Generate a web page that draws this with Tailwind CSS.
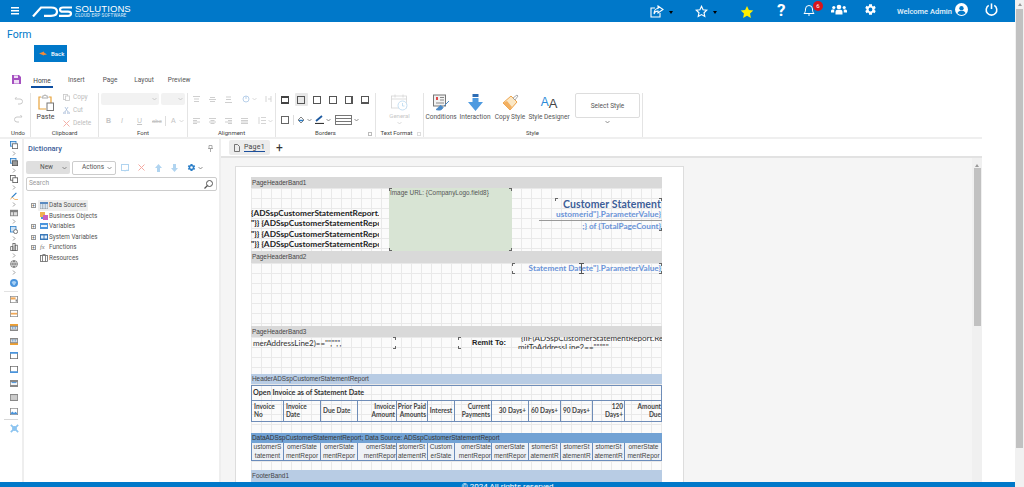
<!DOCTYPE html>
<html lang="en">
  <head>
    <meta charset="UTF-8" />
    <meta name="viewport" content="width=device-width, initial-scale=1.0" />
    <title>Form</title>
    <script src="https://cdn.jsdelivr.net/npm/@tailwindcss/browser@4"></script>
  </head>
  <body class="h-screen overflow-hidden bg-white font-['Roboto',sans-serif] text-[#555]">
    <div class="flex h-[487px] w-[1024px]">
      <div class="flex h-full w-[1015px] flex-col">
        <!-- top bar -->
        <header class="flex h-[22px] shrink-0 items-center bg-[#0078c9] text-white">
          <svg class="ml-[11px] h-[8px] w-[8px]" viewBox="0 0 8 8" fill="#fff"><rect width="8" height="1.500"/><rect y="3" width="8" height="1.500"/><rect y="6" width="8" height="1.500"/></svg>
          <div class="ml-[13px] flex h-[16px] w-[103px] items-center">
            <svg class="h-[11px] w-[41px]" viewBox="0 0 41 11" fill="none" stroke="#fff" stroke-width="2.200"><path d="M1 10.500L9 1.500H19Q25 1.500 25 5.700Q25 9.800 19 9.800H12"/><path d="M40 1.500H31Q28 1.500 28 3.700Q28 5.700 31 5.700H36Q39 5.700 39 7.800Q39 9.800 36 9.800H27"/></svg>
            <div class="ml-[2px] flex flex-col">
              <span class="h-[8px] font-['Liberation_Sans',sans-serif] text-[9.500px] leading-[8px] tracking-[0.1px] text-white">SOLUTIONS</span>
              <span class="h-[5px] text-[4.500px] leading-[5px] tracking-[0.2px] text-white/90">CLOUD ERP SOFTWARE</span>
            </div>
          </div>
          <div class="relative ml-[515px] h-full w-[365px]">
            <svg class="absolute left-0 top-[5px] h-[13px] w-[14px]" viewBox="0 0 14 13" fill="none" stroke="#fff" stroke-width="1.100"><path d="M10 8v4H1V3h4"/><path d="M8 1l5 3.500L8 8V6C6 6 4.500 7 4 9 4 6 5.500 3.500 8 3.500z"/></svg>
            <span class="absolute left-[19px] top-[11px] h-0 w-0 border-x-[2.500px] border-t-[3px] border-x-transparent border-t-black"></span>
            <svg class="absolute left-[45px] top-[5px] h-[13px] w-[13px]" viewBox="0 0 24 24" fill="none" stroke="#fff" stroke-width="2.200"><path d="M12 2.500l2.900 6.300 6.800.8-5 4.700 1.300 6.800-6-3.400-6 3.400 1.300-6.800-5-4.700 6.800-.8z"/></svg>
            <span class="absolute left-[63px] top-[11px] h-0 w-0 border-x-[2.500px] border-t-[3px] border-x-transparent border-t-black"></span>
            <svg class="absolute left-[90px] top-[5px] h-[14px] w-[14px]" viewBox="0 0 24 24" fill="#ffef00"><path d="M12 1.500l3.200 7 7.600.9-5.600 5.200 1.500 7.500-6.700-3.800-6.700 3.800 1.500-7.500-5.600-5.200 7.600-.9z"/></svg>
            <span class="absolute left-[127px] top-0 text-[17px] font-bold leading-[20px]">?</span>
            <svg class="absolute left-[153px] top-[4px] h-[12px] w-[12px]" viewBox="0 0 12 12" fill="none" stroke="#fff" stroke-width="1"><path d="M1 9.500h10C9.500 8 9.500 6.500 9.500 5a3.500 3.500 0 0 0-7 0c0 1.500 0 3-1.500 4.500zM5 11h2"/></svg>
            <span class="absolute left-[163px] top-px flex h-[10px] w-[10px] items-center justify-center rounded-full bg-[#d8141c] text-[6px] leading-none">6</span>
            <svg class="absolute left-[181px] top-[4px] h-[11px] w-[16px]" viewBox="0 0 16 11" fill="#fff"><circle cx="8" cy="3" r="2.300"/><circle cx="2.800" cy="3.500" r="1.600"/><circle cx="13.200" cy="3.500" r="1.600"/><path d="M4.500 10.500V8c0-1.500 1-2.300 2-2.300h3c1 0 2 .8 2 2.300v2.500zM0 8.500V7c0-1 .8-1.500 1.500-1.500h2C3 6.200 3.300 7.500 3.300 8.500zM16 8.500V7c0-1-.8-1.500-1.500-1.500h-2c.5.700.2 2 .2 3z"/></svg>
            <svg class="absolute left-[214px] top-[3px] h-[13px] w-[13px]" viewBox="0 0 24 24" fill="#fff"><path d="M19.400 13a7.500 7.500 0 0 0 0-2l2.300-1.700-2.300-4-2.600 1.100a7.500 7.500 0 0 0-1.800-1L14.700 2.500h-5.400L9 5.400a7.500 7.500 0 0 0-1.800 1L4.600 5.300l-2.300 4L4.600 11a7.500 7.500 0 0 0 0 2l-2.300 1.700 2.300 4 2.600-1.100a7.500 7.500 0 0 0 1.800 1l.3 2.900h5.400l.3-2.900a7.500 7.500 0 0 0 1.800-1l2.600 1.100 2.300-4zM12 15.500a3.500 3.500 0 1 1 0-7 3.500 3.500 0 0 1 0 7z"/></svg>
            <span class="absolute left-[247px] top-[6px] whitespace-nowrap text-[7.500px] font-medium leading-[11px] text-white/90">Welcome Admin</span>
            <svg class="absolute left-[305px] top-[3px] h-[13px] w-[13px]" viewBox="0 0 24 24"><circle cx="12" cy="12" r="12" fill="#fff"/><circle cx="12" cy="9.500" r="4" fill="#0078c9"/><path d="M4.500 19c1.500-3.500 4-4.500 7.500-4.500s6 1 7.500 4.500a10.500 10.500 0 0 1-15 0z" fill="#0078c9"/></svg>
            <svg class="absolute left-[335px] top-[3px] h-[13px] w-[13px]" viewBox="0 0 14 14" fill="none" stroke="#fff" stroke-width="1.700"><path d="M4 2.500a5.700 5.700 0 1 0 6 0"/><path d="M7 .5v6"/></svg>
          </div>
        </header>

        <!-- form head -->
        <div class="h-[53px] shrink-0 pl-[7px] pt-[6px]">
          <h1 class="text-[10.500px] leading-[13px] text-[#0078c9]">Form</h1>
          <button class="ml-[27px] mt-[4px] flex h-[17px] w-[33px] items-center bg-[#0078c9] pl-[5px] text-[6px] text-white">
            <svg class="h-[5px] w-[8px]" viewBox="0 0 8 5" fill="#f08a38"><path d="M0 3.500L3 1.500V.5L8 2.500 3 4.500V4z" transform="matrix(-1 0 0 1 8 0)"/></svg>
            <span class="ml-[4px] font-medium">Back</span>
          </button>
        </div>

        <!-- ribbon tabs -->
        <div class="flex h-[15px] shrink-0 items-start text-[6.500px] leading-[9px]">
          <svg class="ml-[12px] h-[9px] w-[9px]" viewBox="0 0 9 9"><path d="M0 0h7l2 2v7H0z" fill="#a550c0"/><rect x="2" y=".5" width="4" height="2.500" fill="#f0e0f5"/><rect x="2" y="5" width="5" height="3.500" fill="#f0e0f5"/></svg>
          <div class="ml-[10px] flex h-[13px] w-[22px] items-center justify-center border-b-[2px] border-[#0d4ea0] pt-px text-[#444]">Home</div>
          <span class="ml-[15px] mt-[1px] h-[9px]">Insert</span>
          <span class="ml-[18px] mt-[1px] h-[9px]">Page</span>
          <span class="ml-[17px] mt-[1px] h-[9px]">Layout</span>
          <span class="ml-[14px] mt-[1px] h-[9px]">Preview</span>
        </div>

        <!-- ribbon -->
        <div class="flex h-[47px] w-[982px] shrink-0 pt-[3px] text-[6px] leading-[8px]">
          <section class="flex h-[44px] w-[31px] flex-col border-r border-[#e4e4e4]">
            <div class="flex h-[36px] flex-col items-center gap-[9px] pl-[6px] pt-[3px]">
              <svg class="h-[9px] w-[9px]" viewBox="0 0 9 9" fill="none" stroke="#c8c8c8"><path d="M2.500 1L1 3h5a2.500 2.500 0 0 1 0 5H4"/></svg>
              <svg class="h-[9px] w-[9px]" viewBox="0 0 9 9" fill="none" stroke="#c8c8c8"><path d="M6.500 1L8 3H3a2.500 2.500 0 0 0 0 5h2"/></svg>
            </div>
            <div class="pl-[6px] text-center text-[#444]">Undo</div>
          </section>

          <section class="flex h-[44px] w-[68px] flex-col border-r border-[#e4e4e4]">
            <div class="flex h-[36px]">
              <div class="ml-[6px] flex w-[17px] flex-col items-center">
                <svg class="mt-[1px] h-[17px] w-[16px]" viewBox="0 0 16 17" fill="none"><path d="M11 3h2v6M3 3H1v12h7" stroke="#e8a33c" stroke-width="1.200"/><path d="M4 3c0-1 1-1 1-1h1c0-1.500 2-1.500 2 0h1s1 0 1 1v1H4z" stroke="#888" stroke-width=".7" fill="#fff"/><rect x="9" y="9" width="6.500" height="7.500" stroke="#777" fill="#fff"/></svg>
                <span class="mt-[2px] text-[7px] text-[#444]">Paste</span>
              </div>
              <div class="ml-[9px] flex flex-col gap-[5px] text-[6.500px] text-[#bdbdbd]">
                <div class="flex h-[8px] items-center gap-[3px]"><svg class="h-[7px] w-[7px]" viewBox="0 0 7 7" fill="none" stroke="#c8c8c8" stroke-width=".8"><rect x=".5" y=".5" width="4" height="5"/><rect x="2.500" y="2" width="4" height="4.500" fill="#fff"/></svg>Copy</div>
                <div class="flex h-[8px] items-center gap-[3px]"><svg class="h-[7px] w-[7px]" viewBox="0 0 7 7" fill="none" stroke="#a8bcd8" stroke-width=".8"><path d="M2 0l3 5M5 0L2 5"/><circle cx="1.500" cy="6" r="1"/><circle cx="5.500" cy="6" r="1"/></svg>Cut</div>
                <div class="flex h-[8px] items-center gap-[3px]"><svg class="h-[7px] w-[7px]" viewBox="0 0 7 7" fill="none" stroke="#f4b0a8" stroke-width="1"><path d="M.5.500l6 6M6.500.500l-6 6"/></svg>Delete</div>
              </div>
            </div>
            <div class="text-center text-[#444]">Clipboard</div>
          </section>

          <section class="flex h-[44px] w-[89px] flex-col border-r border-[#e4e4e4]">
            <div class="h-[36px]">
              <div class="ml-[2px] flex gap-[2px]">
                <div class="flex h-[12px] w-[58px] items-center justify-end rounded-[2px] bg-[#f2f2f2] pr-[2px]"><svg class="h-[4px] w-[5px]" viewBox="0 0 5 4" fill="none" stroke="#bbb" stroke-width=".7"><path d="M.5 1l2 2 2-2"/></svg></div>
                <div class="flex h-[12px] w-[24px] items-center justify-end rounded-[2px] bg-[#f2f2f2] pr-[2px]"><svg class="h-[4px] w-[5px]" viewBox="0 0 5 4" fill="none" stroke="#bbb" stroke-width=".7"><path d="M.5 1l2 2 2-2"/></svg></div>
              </div>
              <div class="mt-[11px] flex items-center pl-[7px] font-['Liberation_Sans',sans-serif] text-[7px] leading-[8px] text-[#c4c4c4]">
                <b class="w-[15px]">B</b><i class="w-[16px]">I</i><u class="w-[15px]">U</u><span class="w-[12px] text-[6px]"><s>abc</s></span>
                <span class="ml-[1px] h-[10px] w-px bg-[#ddd]"></span><span class="ml-[5px]">A</span>
                <svg class="ml-[3px] h-[4px] w-[5px]" viewBox="0 0 5 4" fill="none" stroke="#ccc" stroke-width=".7"><path d="M.5 1l2 2 2-2"/></svg>
              </div>
            </div>
            <div class="text-center text-[#444]">Font</div>
          </section>

          <section class="flex h-[44px] w-[88px] flex-col border-r border-[#e4e4e4]">
            <div class="h-[36px] pl-[5px] pt-[2px]">
              <div class="flex items-center gap-[9px]">
                <svg class="h-[7px] w-[7px]" viewBox="0 0 7 7" stroke="#cfcfcf"><path d="M0 .5h7M1 3h5M1 5.500h5"/></svg>
                <svg class="h-[7px] w-[7px]" viewBox="0 0 7 7" stroke="#cfcfcf"><path d="M1 1.500h5M0 3.500h7M1 5.500h5"/></svg>
                <svg class="h-[7px] w-[7px]" viewBox="0 0 7 7" stroke="#cfcfcf"><path d="M1 1h5M1 3.500h5M0 6.500h7"/></svg>
                <svg class="ml-[1px] h-[8px] w-[8px]" viewBox="0 0 8 8" fill="none" stroke="#b8d0ea"><circle cx="4" cy="4" r="3"/><path d="M4 1v3"/></svg>
                <svg class="ml-[-7px] h-[4px] w-[5px]" viewBox="0 0 5 4" fill="none" stroke="#ccc" stroke-width=".7"><path d="M.5 1l2 2 2-2"/></svg>
                <svg class="ml-[-1px] h-[8px] w-[7px]" viewBox="0 0 7 8" fill="none" stroke="#d5d5d5"><path d="M1 1v6M6 1v6M3 4h3"/></svg>
              </div>
              <div class="mt-[14px] flex items-center gap-[9px]">
                <svg class="h-[6px] w-[7px]" viewBox="0 0 7 6" stroke="#cfcfcf"><path d="M0 .5h7M0 2.500h4M0 4h7M0 5.500h4"/></svg>
                <svg class="h-[6px] w-[7px]" viewBox="0 0 7 6" stroke="#cfcfcf"><path d="M0 .5h7M1.500 2.500h4M0 4h7M1.500 5.500h4"/></svg>
                <svg class="h-[6px] w-[7px]" viewBox="0 0 7 6" stroke="#cfcfcf"><path d="M0 .5h7M3 2.500h4M0 4h7M3 5.500h4"/></svg>
                <svg class="h-[6px] w-[7px]" viewBox="0 0 7 6" stroke="#cfcfcf"><path d="M0 .5h7M0 2.500h7M0 4h7M0 5.500h7"/></svg>
                <svg class="ml-[1px] h-[7px] w-[8px]" viewBox="0 0 8 7" stroke="#d5d5d5"><path d="M3 .5h5M3 3.500h5M3 6.500h5M1 0v7"/></svg>
                <svg class="ml-[-7px] h-[4px] w-[5px]" viewBox="0 0 5 4" fill="none" stroke="#ccc" stroke-width=".7"><path d="M.5 1l2 2 2-2"/></svg>
              </div>
            </div>
            <div class="text-center text-[#444]">Alignment</div>
          </section>

          <section class="relative flex h-[44px] w-[100px] flex-col border-r border-[#e4e4e4]">
            <div class="h-[36px] pl-[4px]">
              <div class="flex items-center gap-[6px]">
                <span class="flex h-[13px] w-[10px] items-center justify-center"><span class="h-[8px] w-[8px] border border-b-2 border-t-2 border-[#444]"></span></span>
                <span class="mx-[-1.500px] flex h-[13px] w-[13px] items-center justify-center rounded-[1px] bg-[#e8e8e8]"><span class="h-[8px] w-[8px] border border-[#555]"></span></span>
                <span class="flex h-[13px] w-[10px] items-center justify-center"><span class="h-[8px] w-[8px] border border-[#555]"></span></span>
                <span class="flex h-[13px] w-[10px] items-center justify-center"><span class="h-[8px] w-[8px] border border-[#555]"></span></span>
                <span class="flex h-[13px] w-[10px] items-center justify-center"><span class="h-[8px] w-[8px] border border-r-2 border-[#555]"></span></span>
                <span class="flex h-[13px] w-[10px] items-center justify-center"><span class="h-[8px] w-[8px] border border-b-2 border-[#555]"></span></span>
              </div>
              <div class="mt-[7px] flex items-center">
                <span class="flex h-[13px] w-[10px] items-center justify-center"><span class="h-[8px] w-[8px] border border-[#666]"></span></span>
                <span class="ml-[3px] h-[10px] w-px bg-[#ddd]"></span>
                <svg class="ml-[3px] h-[8px] w-[8px]" viewBox="0 0 8 8" fill="none" stroke="#666" stroke-width=".8"><path d="M1 4l3-3 3 3-3 3z"/><path d="M2 4.500h4" stroke="#2a7ec8" stroke-width="1.500"/></svg>
                <svg class="ml-[2px] h-[4px] w-[5px]" viewBox="0 0 5 4" fill="none" stroke="#666" stroke-width=".7"><path d="M.5 1l2 2 2-2"/></svg>
                <svg class="ml-[3px] h-[9px] w-[9px]" viewBox="0 0 9 9" fill="none"><path d="M1 6L7 1" stroke="#1e5aa0" stroke-width="1.800"/><path d="M0 8.500h9" stroke="#333" stroke-width="1.200"/></svg>
                <svg class="ml-[2px] h-[4px] w-[5px]" viewBox="0 0 5 4" fill="none" stroke="#666" stroke-width=".7"><path d="M.5 1l2 2 2-2"/></svg>
                <span class="ml-[4px] flex h-[10px] w-[17px] flex-col justify-between border border-[#777] py-[2px]"><span class="h-px bg-[#777]"></span><span class="h-px bg-[#777]"></span></span>
                <svg class="ml-[2px] h-[4px] w-[5px]" viewBox="0 0 5 4" fill="none" stroke="#666" stroke-width=".7"><path d="M.5 1l2 2 2-2"/></svg>
              </div>
            </div>
            <div class="text-center text-[#444]">Borders</div>
            <span class="absolute bottom-[1px] right-[3px] h-[4px] w-[4px] border border-[#bbb]"></span>
          </section>

          <section class="relative flex h-[44px] w-[48px] flex-col border-r border-[#e4e4e4]">
            <div class="flex h-[36px] flex-col items-center text-[#c8c8c8]">
              <svg class="mt-[1px] h-[17px] w-[17px]" viewBox="0 0 17 17" fill="none" stroke="#d4d4d4" stroke-width=".8"><rect x=".5" y="2" width="15" height="12"/><path d="M.5 5h15M4 .5v3M12 .5v3"/><circle cx="11.500" cy="11.500" r="4.500" stroke="#b8d8f0" fill="#fff"/><path d="M11.500 9v3h2" stroke="#b8d8f0"/></svg>
              <span class="mt-[1px]">General</span>
              <svg class="mt-[1px] h-[4px] w-[5px]" viewBox="0 0 5 4" fill="none" stroke="#ccc" stroke-width=".7"><path d="M.5 1l2 2 2-2"/></svg>
            </div>
            <div class="whitespace-nowrap pr-[6px] text-center text-[#444]">Text Format</div>
            <span class="absolute bottom-[1px] right-[2px] h-[4px] w-[4px] border border-[#ddd]"></span>
          </section>

          <section class="flex h-[44px] w-[219px] flex-col border-r border-[#e4e4e4]">
            <div class="flex h-[36px] text-[6.500px] text-[#555]">
              <div class="ml-[2px] flex w-[30px] flex-col items-center">
                <svg class="mt-[1px] h-[17px] w-[17px]" viewBox="0 0 17 17" fill="none"><rect x=".5" y="1" width="12" height="11" stroke="#777" fill="#f2f2f2"/><path d="M3 3h2v3H3z" fill="#e04848"/><path d="M7 3.500h4M7 6h4M3 9h8" stroke="#888"/><path d="M6 16c-1.500 0-3-.5-3-.5 2-.5 2-3 5-4l2 2c-1 2-2 2.500-4 2.500zM11 12l5-5" stroke="#4a8ac8" fill="#4a8ac8"/></svg>
                <span class="mt-[2px]">Conditions</span>
              </div>
              <div class="ml-[4px] flex w-[30px] flex-col items-center">
                <svg class="mt-[1px] h-[17px] w-[15px]" viewBox="0 0 15 17" fill="#4e9ae0"><path d="M4.500 0h6v3h-6z" fill="#2c6cb4"/><path d="M4.500 4h6v4h4.500L7.500 17 0 8h4.500z"/></svg>
                <span class="mt-[2px]">Interaction</span>
              </div>
              <div class="ml-[4px] flex w-[32px] flex-col items-center">
                <svg class="mt-[1px] h-[17px] w-[17px]" viewBox="0 0 17 17" fill="none"><path d="M1 9l8-7 6 6-7 8z" fill="#fbe7c4" stroke="#eda24a"/><path d="M1 9l7 7 2-3-5-6z" fill="#f3b060"/><path d="M11 4l4-3 1 1-3 4z" fill="#fff" stroke="#888" stroke-width=".7"/></svg>
                <span class="mt-[2px]">Copy Style</span>
              </div>
              <div class="ml-[3px] flex w-[40px] flex-col items-center">
                <span class="mt-[-1px] flex h-[19px] items-end font-['Liberation_Sans',sans-serif] leading-none"><span class="mb-[3px] text-[12px] text-[#2a8ad8]">A</span><span class="mb-[1px] text-[13px] text-[#444]">A</span></span>
                <span class="mt-[2px] whitespace-nowrap">Style Designer</span>
              </div>
              <div class="ml-[6px] flex w-[65px] flex-col items-center">
                <div class="flex h-[25px] w-[65px] items-center justify-center rounded-[2px] border border-[#ddd]">Select Style</div>
                <svg class="mt-[2px] h-[4px] w-[5px]" viewBox="0 0 5 4" fill="none" stroke="#666" stroke-width=".7"><path d="M.5 1l2 2 2-2"/></svg>
              </div>
            </div>
            <div class="mr-[1px] text-center text-[#444]">Style</div>
          </section>
        </div>

        <div class="h-[2px] w-[982px] shrink-0 bg-[#efefef]"></div>

        <!-- workspace -->
        <div class="flex min-h-0 w-[982px] flex-1">
          <!-- left tool strip -->
          <aside class="flex w-[24px] shrink-0 flex-col items-center border-r-2 border-[#eee] pl-[6px] pt-[2px]">
            <svg class="h-[8px] w-[8px]" viewBox="0 0 10 10" fill="none"><rect x=".5" y=".5" width="7" height="6" stroke="#2a7ec8" fill="#cfe3f5"/><rect x="3" y="3.500" width="6.500" height="6" stroke="#666" fill="#fff"/></svg>
            <svg class="my-[2px] h-[5px] w-[4px]" viewBox="0 0 4 5" fill="none" stroke="#777" stroke-width=".7"><path d="M1 .5l2 2-2 2"/></svg>
            <svg class="h-[8px] w-[8px]" viewBox="0 0 10 10" fill="none"><rect x=".5" y=".5" width="7" height="6" stroke="#2a7ec8" fill="#cfe3f5"/><rect x="3" y="3.500" width="6.500" height="6" stroke="#555" fill="#999"/></svg>
            <svg class="my-[2px] h-[5px] w-[4px]" viewBox="0 0 4 5" fill="none" stroke="#777" stroke-width=".7"><path d="M1 .5l2 2-2 2"/></svg>
            <svg class="h-[8px] w-[8px]" viewBox="0 0 10 10" fill="none" stroke="#555"><rect x=".5" y=".5" width="6" height="6"/><rect x="3.500" y="3.500" width="6" height="6" fill="#fff"/></svg>
            <svg class="my-[2px] h-[5px] w-[4px]" viewBox="0 0 4 5" fill="none" stroke="#777" stroke-width=".7"><path d="M1 .5l2 2-2 2"/></svg>
            <svg class="h-[8px] w-[8px]" viewBox="0 0 10 10" fill="none"><path d="M2 7l6-6" stroke="#2a7ec8" stroke-width="1.500"/><path d="M0 9.500l3-3 3 3h4" stroke="#f0a040"/></svg>
            <svg class="my-[2px] h-[5px] w-[4px]" viewBox="0 0 4 5" fill="none" stroke="#777" stroke-width=".7"><path d="M1 .5l2 2-2 2"/></svg>
            <svg class="h-[8px] w-[8px]" viewBox="0 0 10 10"><rect y="1" width="10" height="8" fill="#808080"/><rect x="1" y="4" width="3" height="4" fill="#ddd"/><rect x="5" y="4" width="4" height="4" fill="#ddd"/></svg>
            <svg class="my-[2px] h-[5px] w-[4px]" viewBox="0 0 4 5" fill="none" stroke="#777" stroke-width=".7"><path d="M1 .5l2 2-2 2"/></svg>
            <svg class="h-[8px] w-[8px]" viewBox="0 0 10 10" fill="none"><rect x=".5" y=".5" width="7" height="7" stroke="#2a7ec8" fill="#cfe3f5"/><circle cx="7" cy="7" r="2.500" stroke="#555" fill="#fff"/></svg>
            <svg class="my-[2px] h-[5px] w-[4px]" viewBox="0 0 4 5" fill="none" stroke="#777" stroke-width=".7"><path d="M1 .5l2 2-2 2"/></svg>
            <svg class="h-[8px] w-[8px]" viewBox="0 0 10 11" fill="none" stroke="#555"><rect x=".5" y="5" width="3" height="5.500"/><rect x="3.500" y=".5" width="3" height="10"/><rect x="6.500" y="3" width="3" height="7.500"/></svg>
            <svg class="my-[2px] h-[5px] w-[4px]" viewBox="0 0 4 5" fill="none" stroke="#777" stroke-width=".7"><path d="M1 .5l2 2-2 2"/></svg>
            <svg class="h-[8px] w-[8px]" viewBox="0 0 10 10" fill="none" stroke="#666"><circle cx="5" cy="5" r="4.300"/><path d="M1 5h8M5 1c-2 2-2 6 0 8M5 1c2 2 2 6 0 8"/></svg>
            <svg class="my-[2px] h-[5px] w-[4px]" viewBox="0 0 4 5" fill="none" stroke="#777" stroke-width=".7"><path d="M1 .5l2 2-2 2"/></svg>
            <svg class="mt-[2px] h-[8px] w-[8px]" viewBox="0 0 10 10"><circle cx="5" cy="5" r="5" fill="#4a94dc"/><path d="M2 4c2-2 4-2 6 0-1 1-1 3-3 4-1-1-2-2-3-4z" fill="#a8d0f4"/></svg>
            <div class="ml-[-6px] mt-[4px] h-[1px] w-[14px] bg-[#e2e2e2]"></div>
            <div class="mt-[4px] flex flex-col items-center gap-[7px]">
              <svg class="h-[7px] w-[8px]" viewBox="0 0 10 10" preserveAspectRatio="none"><rect width="10" height="10" fill="#888"/><rect x="1" y="1" width="8" height="8" fill="#fff"/><rect x="1" y="2" width="6" height="3" fill="#f0a858"/><rect x="7" y="5" width="2" height="3" fill="#888"/></svg>
              <svg class="h-[7px] w-[8px]" viewBox="0 0 10 10" preserveAspectRatio="none"><rect width="10" height="10" fill="#888"/><rect x="1" y="1" width="8" height="8" fill="#fff"/><rect x="1" y="4" width="8" height="2.500" fill="#f0a858"/></svg>
              <svg class="h-[7px] w-[8px]" viewBox="0 0 10 10" preserveAspectRatio="none"><rect width="10" height="10" fill="#888"/><rect width="10" height="2.500" fill="#f0a030"/><rect x="1" y="4" width="8" height="4" fill="#ddd"/><rect x="3" y="4" width="1" height="3" fill="#4a94dc"/><rect x="6" y="4" width="1" height="3" fill="#4a94dc"/></svg>
              <svg class="h-[7px] w-[8px]" viewBox="0 0 10 10" preserveAspectRatio="none"><rect width="10" height="10" fill="#888"/><rect y="7.500" width="10" height="2.500" fill="#f0a030"/><rect x="1" y="2" width="8" height="4" fill="#ddd"/><rect x="3" y="2" width="1" height="3" fill="#4a94dc"/><rect x="6" y="2" width="1" height="3" fill="#4a94dc"/></svg>
              <svg class="h-[7px] w-[8px]" viewBox="0 0 10 10" preserveAspectRatio="none"><rect width="10" height="10" fill="#666"/><rect x="1" y="1" width="8" height="8" fill="#fff"/><rect width="10" height="2.500" fill="#4a94dc"/></svg>
              <svg class="h-[7px] w-[8px]" viewBox="0 0 10 10" preserveAspectRatio="none"><rect width="10" height="10" fill="#666"/><rect x="1" y="1" width="8" height="8" fill="#fff"/><rect y="7.500" width="10" height="2.500" fill="#4a94dc"/></svg>
              <svg class="h-[7px] w-[8px]" viewBox="0 0 10 10" preserveAspectRatio="none"><rect width="10" height="10" fill="#888"/><rect x="1" y="3" width="8" height="4" fill="#fff"/><rect x="2" y="3" width="6" height="1.500" fill="#4a94dc"/></svg>
              <svg class="h-[7px] w-[8px]" viewBox="0 0 10 10" preserveAspectRatio="none"><rect width="10" height="10" fill="#888"/><rect x="1" y="1.500" width="8" height="7" fill="#ccc"/></svg>
              <svg class="h-[7px] w-[8px]" viewBox="0 0 10 10" preserveAspectRatio="none"><rect width="10" height="10" fill="#888"/><rect x="1" y="1" width="8" height="8" fill="#fff"/><path d="M1 7l2-2 2 2 2-1.500 2 2V9H1z" fill="#4a94dc"/></svg>
            </div>
            <div class="ml-[-6px] mt-[4px] h-[1px] w-[14px] bg-[#d8d8d8]"></div>
            <svg class="mt-[4px] h-[9px] w-[9px]" viewBox="0 0 11 11" stroke="#8cc4f0" stroke-width="2" fill="none"><path d="M1 1l9 9M10 1L1 10"/><circle cx="5.500" cy="5.500" r="2" fill="#8cc4f0"/></svg>
          </aside>

          <!-- dictionary -->
          <aside class="w-[197px] shrink-0 border-r-2 border-[#eee] pl-[2px] pt-[1px]">
            <div class="flex h-[17px] items-center justify-between pl-[2px] pr-[6px]">
              <span class="text-[7.500px] font-medium text-[#3d5e98]">Dictionary</span>
              <svg class="h-[7px] w-[5px]" viewBox="0 0 5 7" fill="none" stroke="#999" stroke-width=".8"><path d="M1 .5h3v3H1zM0 3.500h5M2.500 4v3"/></svg>
            </div>
            <div class="mt-[4px] flex h-[13px] items-center">
              <div class="flex h-[13px] w-[44px] items-center justify-between rounded-[2px] bg-[#dfdfdf] pl-[14px] pr-[3px] text-[6.500px]">New<svg class="h-[4px] w-[5px]" viewBox="0 0 5 4" fill="none" stroke="#666" stroke-width=".7"><path d="M.5 1l2 2 2-2"/></svg></div>
              <div class="ml-[2px] flex h-[14px] w-[44px] items-center justify-between rounded-[2px] border border-[#ccc] pl-[9px] pr-[3px] text-[6.500px]">Actions<svg class="h-[4px] w-[5px]" viewBox="0 0 5 4" fill="none" stroke="#666" stroke-width=".7"><path d="M.5 1l2 2 2-2"/></svg></div>
              <svg class="ml-[5px] h-[8px] w-[8px]" viewBox="0 0 8 8" fill="none" stroke="#b0d4f0"><rect x=".5" y=".5" width="7" height="6"/><path d="M4 7.500l2-2"/></svg>
              <svg class="ml-[9px] h-[7px] w-[7px]" viewBox="0 0 7 7" fill="none" stroke="#f4a8a0"><path d="M.5.500l6 6M6.500.500l-6 6"/></svg>
              <svg class="ml-[10px] h-[8px] w-[7px]" viewBox="0 0 7 8" fill="#b0d4f0"><path d="M3.500 0L7 4H5v4H2V4H0z"/></svg>
              <svg class="ml-[9px] h-[8px] w-[7px]" viewBox="0 0 7 8" fill="#b0d4f0"><path d="M3.500 8L7 4H5V0H2v4H0z"/></svg>
              <svg class="ml-[9px] h-[9px] w-[9px]" viewBox="0 0 24 24" fill="#2a7ec8"><path d="M19.400 13a7.500 7.500 0 0 0 0-2l2.300-1.700-2.300-4-2.600 1.100a7.500 7.500 0 0 0-1.800-1L14.700 2.500h-5.400L9 5.400a7.500 7.500 0 0 0-1.800 1L4.600 5.300l-2.300 4L4.600 11a7.500 7.500 0 0 0 0 2l-2.300 1.700 2.300 4 2.600-1.100a7.500 7.500 0 0 0 1.800 1l.3 2.900h5.400l.3-2.900a7.500 7.500 0 0 0 1.800-1l2.600 1.100 2.300-4zM12 15.500a3.500 3.500 0 1 1 0-7 3.500 3.500 0 0 1 0 7z"/></svg>
              <svg class="ml-[2px] h-[4px] w-[5px]" viewBox="0 0 5 4" fill="none" stroke="#666" stroke-width=".7"><path d="M.5 1l2 2 2-2"/></svg>
            </div>
            <div class="mt-[3px] flex h-[14px] w-[191px] items-center justify-between rounded-[2px] border border-[#ccc] pl-[2px] pr-[3px] text-[6.500px] text-[#999]">
              Search
              <svg class="h-[9px] w-[9px]" viewBox="0 0 9 9" fill="none" stroke="#555"><circle cx="5.500" cy="3.500" r="3"/><path d="M3.500 5.500L.5 8.500" stroke-width="1.200"/></svg>
            </div>
            <ul class="mt-[9px] text-[6.300px] leading-[10.600px] text-[#555]">
              <li class="flex h-[10.600px] items-center">
                <span class="ml-[5px] flex h-[5px] w-[5px] items-center justify-center border border-[#999] text-[5px] leading-none">+</span>
                <span class="ml-[2px] flex h-[10.600px] items-center gap-[1px] rounded-[1px] bg-[#eee] pl-[2px] pr-[2px]"><svg class="h-[7px] w-[8px]" viewBox="0 0 8 7"><rect width="8" height="7" fill="#d8e6f4" stroke="#666" stroke-width=".5"/><rect width="8" height="2" fill="#5a8ac0"/><path d="M2.700 2v5M5.300 2v5" stroke="#666" stroke-width=".4"/></svg>Data Sources</span>
              </li>
              <li class="flex h-[10.600px] items-center">
                <span class="ml-[14px] flex items-center gap-[1px]"><svg class="h-[8px] w-[8px]" viewBox="0 0 8 8"><rect width="5" height="5" fill="#f0b050"/><rect x="3" y="3" width="5" height="5" fill="#c860c0"/><rect x="1" y="5" width="2" height="2" fill="#4a94dc"/></svg>Business Objects</span>
              </li>
              <li class="flex h-[10.600px] items-center">
                <span class="ml-[5px] flex h-[5px] w-[5px] items-center justify-center border border-[#999] text-[5px] leading-none">+</span>
                <span class="ml-[4px] flex items-center gap-[1px]"><svg class="h-[6px] w-[8px]" viewBox="0 0 8 6"><rect width="8" height="6" fill="#4a94dc"/><rect x="1" y="2" width="6" height="2" fill="#e8f2fb"/></svg>Variables</span>
              </li>
              <li class="flex h-[10.600px] items-center">
                <span class="ml-[5px] flex h-[5px] w-[5px] items-center justify-center border border-[#999] text-[5px] leading-none">+</span>
                <span class="ml-[4px] flex items-center gap-[1px]"><svg class="h-[6px] w-[8px]" viewBox="0 0 8 6"><rect width="8" height="6" fill="#3a78b8"/><rect x="1" y="1.500" width="2.500" height="3" fill="#e8f2fb"/><rect x="4.500" y="1.500" width="2.500" height="3" fill="#e8f2fb"/></svg>System Variables</span>
              </li>
              <li class="flex h-[10.600px] items-center">
                <span class="ml-[5px] flex h-[5px] w-[5px] items-center justify-center border border-[#999] text-[5px] leading-none">+</span>
                <span class="ml-[4px] flex items-center gap-[2px]"><i class="w-[7px] font-['Liberation_Serif',serif] text-[6.500px] text-[#777]">fx</i>Functions</span>
              </li>
              <li class="flex h-[10.600px] items-center">
                <span class="ml-[14px] flex items-center gap-[1px]"><svg class="h-[8px] w-[8px]" viewBox="0 0 8 8" fill="none" stroke="#666" stroke-width=".8"><rect x=".5" y="1.500" width="7" height="6"/><path d="M2.500 1.500v6M5.500 1.500v6M2.500.500h3"/></svg>Resources</span>
              </li>
            </ul>
          </aside>

          <!-- designer -->
          <main class="flex min-w-0 flex-1 flex-col">
            <div class="flex h-[19px] shrink-0 items-center border-b-2 border-[#e2e2e2] pl-[8px]">
              <div class="flex h-[15px] w-[41px] items-center gap-[4px] rounded-[2px] bg-[#ececec] pl-[5px] text-[7px] text-[#444]">
                <svg class="h-[8px] w-[6px]" viewBox="0 0 6 8" fill="none" stroke="#555" stroke-width=".8"><path d="M.5.500h3l2 2v5h-5z"/></svg>
                <span class="border-b border-[#1c4f9c] leading-[8px] tracking-[0.2px]">Page1</span>
              </div>
              <span class="ml-[6px] text-[12px] leading-none text-[#333]">+</span>
            </div>
            <div class="flex min-h-0 flex-1 bg-[#f5f5f5]">
              <div class="min-w-0 flex-1 pl-[14px] pt-[8px]">
                <div class="h-[320px] w-[449px] border border-b-0 border-[#ddd] bg-white pl-[15px] pt-[10px] font-['Liberation_Sans',sans-serif]">
                  <div class="w-[411px] text-[6.400px] text-[#444]">
                    <div class="flex h-[11px] items-center bg-[#d9d9d9] pl-px">PageHeaderBand1</div>
                    <div class="relative h-[63px] bg-[#fbfbfb] bg-[linear-gradient(#e9e9e9_1px,transparent_1px),linear-gradient(90deg,#e9e9e9_1px,transparent_1px)] bg-[size:10px_10px]">
                      <div class="absolute left-0 top-[20px] h-[43px] w-[128px] overflow-hidden font-['Lato',sans-serif] text-[8.300px] font-bold leading-[10.400px] text-[#222]">
                        <div class="whitespace-nowrap">{ADSspCustomerStatementReport.F</div>
                        <div class="whitespace-nowrap">"}} {ADSspCustomerStatementRepo</div>
                        <div class="whitespace-nowrap">"}} {ADSspCustomerStatementRepo</div>
                        <div class="whitespace-nowrap">"}} {ADSspCustomerStatementRepo</div>
                      </div>
                      <div class="absolute left-[138px] top-0 h-[63px] w-[123px] bg-[#d8e4d4] leading-[9px] text-[#555]"><span class="pl-px">Image URL: {CompanyLogo.field8}</span></div>
                      <div class="absolute left-[138px] top-0 h-[3px] w-[3px] border-l border-t border-[#666]"></div>
                      <div class="absolute left-[258px] top-0 h-[3px] w-[3px] border-r border-t border-[#666]"></div>
                      <div class="absolute left-[138px] top-[60px] h-[3px] w-[3px] border-b border-l border-[#666]"></div>
                      <div class="absolute left-[258px] top-[60px] h-[3px] w-[3px] border-b border-r border-[#666]"></div>
                      <div class="absolute right-px top-[11px] h-[11px] w-[106px] whitespace-nowrap text-right font-['Lato',sans-serif] text-[10.500px] font-bold leading-[11px] tracking-[0.1px] text-[#3d5e98]">Customer Statement</div>
                      <div class="absolute left-[288px] top-[21px] w-[122px] overflow-hidden whitespace-nowrap text-right font-['Lato',sans-serif] text-[8.200px] font-bold leading-[10px] text-[#6a94d8]">ustomerid"].ParameterValue}</div>
                      <div class="absolute left-[288px] top-[32px] h-px w-[123px] bg-[#999]"></div>
                      <div class="absolute right-px top-[33px] w-[80px] whitespace-nowrap text-right font-['Lato',sans-serif] text-[8.200px] font-bold leading-[10px] text-[#6a94d8]">;} of {TotalPageCount}</div>
                      <div class="absolute left-[304px] top-[10px] h-[3px] w-[3px] border-l border-t border-[#666]"></div>
                      <div class="absolute left-[408px] top-[10px] h-[3px] w-[3px] border-r border-t border-[#666]"></div>
                      <div class="absolute left-[408px] top-[40px] h-[3px] w-[3px] border-b border-r border-[#666]"></div>
                    </div>
                    <div class="flex h-[12px] items-center bg-[#d9d9d9] pl-px">PageHeaderBand2</div>
                    <div class="relative h-[63px] bg-[#fbfbfb] bg-[linear-gradient(#e9e9e9_1px,transparent_1px),linear-gradient(90deg,#e9e9e9_1px,transparent_1px)] bg-[size:10px_10px]">
                      <div class="absolute left-[261px] top-0 flex h-[11px] w-[150px] items-center justify-end overflow-hidden whitespace-nowrap pr-[1px] font-['Lato',sans-serif] text-[8.200px] font-bold text-[#6a94d8]">Statement Datete"].ParameterValue}</div>
                      <div class="absolute left-[261px] top-0 h-[3px] w-[3px] border-l border-t border-[#666]"></div>
                      <div class="absolute left-[261px] top-[8px] h-[3px] w-[3px] border-b border-l border-[#666]"></div>
                      <div class="absolute left-[408px] top-0 h-[3px] w-[3px] border-r border-t border-[#666]"></div>
                      <div class="absolute left-[408px] top-[8px] h-[3px] w-[3px] border-b border-r border-[#666]"></div>
                      <div class="absolute left-[330px] top-0 h-[11px] w-px bg-[#555]"></div>
                      <div class="absolute left-[328px] top-0 h-px w-[5px] bg-[#555]"></div>
                      <div class="absolute left-[328px] top-[10px] h-px w-[5px] bg-[#555]"></div>
                    </div>
                    <div class="flex h-[11px] items-center bg-[#d9d9d9] pl-px">PageHeaderBand3</div>
                    <div class="relative h-[37px] bg-[#fbfbfb] bg-[linear-gradient(#e9e9e9_1px,transparent_1px),linear-gradient(90deg,#e9e9e9_1px,transparent_1px)] bg-[size:10px_10px]">
                      <div class="absolute left-0 top-0 h-[12px] w-[144px] overflow-hidden whitespace-nowrap pl-[2px] font-['Lato',sans-serif] text-[8px] leading-[12px] text-[#333]">merAddressLine2)=="","",",</div>
                      <div class="absolute left-[142px] top-0 h-[3px] w-[3px] border-r border-t border-[#666]"></div>
                      <div class="absolute left-[142px] top-[9px] h-[3px] w-[3px] border-b border-r border-[#666]"></div>
                      <div class="absolute left-[207px] top-0 flex h-[12px] w-[50px] items-center justify-end pr-[2px] text-[7.500px] font-bold text-[#222]">Remit To:</div>
                      <div class="absolute left-[207px] top-0 h-[3px] w-[3px] border-l border-t border-[#666]"></div>
                      <div class="absolute left-[207px] top-[9px] h-[3px] w-[3px] border-b border-l border-[#666]"></div>
                      <div class="absolute left-[266px] top-0 h-[12px] w-[145px] overflow-hidden whitespace-nowrap pl-[1px] font-['Lato',sans-serif] text-[8px] leading-[9px] text-[#333]"><div class="mt-[-3px]">"{IIF(ADSspCustomerStatementReport.Re<br />mitToAddressLine2=="","",",</div></div>
                    </div>
                    <div class="flex h-[10px] items-center bg-[#b8cce4] pl-px">HeaderADSspCustomerStatementReport</div>
                    <div class="h-[49px] bg-[#fbfbfb] bg-[linear-gradient(#e9e9e9_1px,transparent_1px),linear-gradient(90deg,#e9e9e9_1px,transparent_1px)] bg-[size:10px_10px] pt-px">
                      <div class="flex h-[16px] items-center border border-[#6f8db8] pl-[1px] font-['Lato',sans-serif] text-[7.200px] font-bold text-[#333]">Open Invoice as of Statement Date</div>
                      <div class="grid h-[21px] grid-cols-[32px_37px_37px_39px_31px_27px_37px_37px_32px_32px_32px_37px] divide-x divide-[#6f8db8] border-x border-b border-[#6f8db8] font-['Lato',sans-serif] text-[6.500px] font-bold leading-[8.300px] text-[#444]">
                        <div class="flex items-center pl-[2px]">Invoice No</div>
                        <div class="flex items-center pl-[2px]">Invoice Date</div>
                        <div class="flex items-center pl-[2px]">Due Date</div>
                        <div class="flex items-center justify-end pr-[1px] text-right">Invoice Amount</div>
                        <div class="flex items-center justify-center pr-[1px] text-right">Prior Paid Amounts</div>
                        <div class="flex items-center justify-center">Interest</div>
                        <div class="flex items-center justify-end pr-[1px] text-right">Current Payments</div>
                        <div class="flex items-center justify-end pr-[2px]">30 Days+</div>
                        <div class="flex items-center justify-center">60 Days+</div>
                        <div class="flex items-center justify-center">90 Days+</div>
                        <div class="flex items-center justify-end pr-[1px] text-right">120 Days+</div>
                        <div class="flex items-center justify-end pr-[1px] text-right">Amount Due</div>
                      </div>
                    </div>
                    <div class="flex h-[10px] items-center bg-[#72a2d4] pl-px text-[#333]">DataADSspCustomerStatementReport; Data Source: ADSspCustomerStatementReport</div>
                    <div class="grid h-[18px] grid-cols-[32px_37px_37px_39px_31px_27px_37px_37px_32px_32px_32px_37px] divide-x divide-[#6a8cbc] border-x border-b border-[#6a8cbc] bg-[#eef1f6] text-center text-[6.500px] leading-[8.500px] text-[#444]">
                      <div class="overflow-hidden">ustomerS tatement</div>
                      <div class="overflow-hidden">omerState mentRepor</div>
                      <div class="overflow-hidden">omerState mentRepor</div>
                      <div class="overflow-hidden text-right">omerState mentRepor</div>
                      <div class="overflow-hidden">stomerSt atementR</div>
                      <div class="overflow-hidden">Custom erState</div>
                      <div class="overflow-hidden text-right">omerState mentRepor</div>
                      <div class="overflow-hidden">omerState mentRepor</div>
                      <div class="overflow-hidden">stomerSt atementR</div>
                      <div class="overflow-hidden">stomerSt atementR</div>
                      <div class="overflow-hidden">stomerSt atementR</div>
                      <div class="overflow-hidden">omerState mentRepor</div>
                    </div>
                    <div class="h-[9px] bg-[#fbfbfb] bg-[linear-gradient(#e9e9e9_1px,transparent_1px),linear-gradient(90deg,#e9e9e9_1px,transparent_1px)] bg-[size:10px_10px]"></div>
                    <div class="flex h-[12px] items-center bg-[#b8cce4] pl-px">FooterBand1</div>
                  </div>
                </div>
              </div>
              <div class="flex w-[10px] shrink-0 flex-col items-center bg-[#f0f0f0]">
                <span class="mt-[6px] h-0 w-0 border-x-[2px] border-b-[3px] border-x-transparent border-b-[#999]"></span>
                <div class="mt-[1px] h-[158px] w-[7px] bg-[#c1c1c1]"></div>
              </div>
            </div>
          </main>
        </div>

        <footer class="h-[5px] shrink-0 overflow-hidden bg-[#0078c9] text-center text-[8px] leading-[10px] text-white">© 2024 All rights reserved</footer>
      </div>

      <!-- page scrollbar -->
      <div class="flex w-[9px] shrink-0 flex-col items-center bg-[#f1f1f1]">
        <span class="mt-[3px] h-0 w-0 border-x-[2px] border-b-[3px] border-x-transparent border-b-[#999]"></span>
        <div class="mt-[3px] h-[439px] w-[7px] bg-[#c1c1c1]"></div>
      </div>
    </div>
  </body>
</html>
